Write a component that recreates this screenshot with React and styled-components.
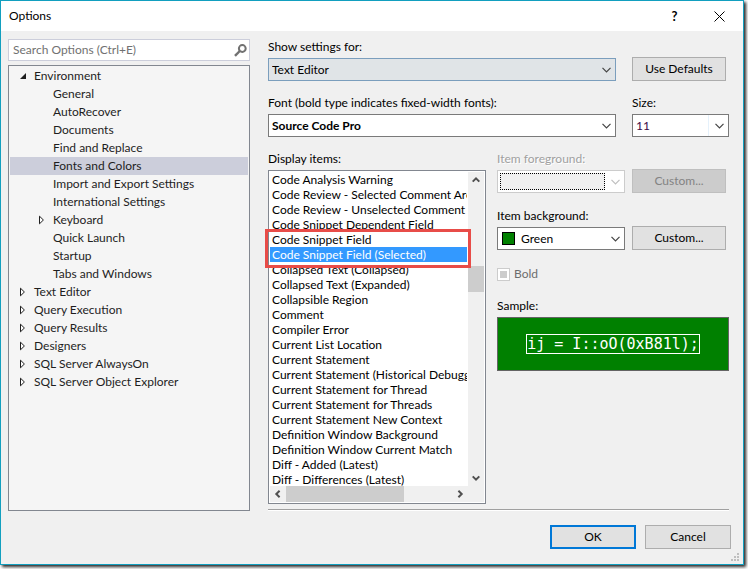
import React from "react";
import styled, { createGlobalStyle, css } from "styled-components";

const GlobalStyle = createGlobalStyle`
  * { box-sizing: border-box; }
  body { margin: 0; background: #fff; overflow: hidden; }
  body, button, input, select {
    font-family: Lato, "Open Sans", sans-serif;
    font-size: 12px;
    line-height: 16px;
    color: #000;
  }
  ul { list-style: none; margin: 0; padding: 0; }
`;

const Dialog = styled.main`
  margin: 0 4px 4px 0;
  border: 1px solid #129fbf;
  background: #f0f0f0;
  box-shadow: 2px 2px 3px rgba(0, 0, 0, 0.85);
`;

const TitleBar = styled.header`
  display: flex;
  align-items: center;
  height: 30px;
  padding: 0 16px 0 8px;
  background: #fff;
`;

const Title = styled.h1`
  flex: 1;
  margin: 0;
  font-size: 12px;
  font-weight: 400;
`;

const TitleButton = styled.button`
  display: grid;
  place-items: center;
  width: 15px;
  height: 24px;
  margin-left: 30px;
  padding: 0;
  border: 0;
  background: transparent;
  font-size: 13px;
  font-weight: 700;
`;

const Body = styled.div`
  display: grid;
  grid-template-columns: 242px minmax(0, 1fr);
  gap: 18px;
  padding: 8px 14px 0 7px;
`;

const Sidebar = styled.nav`
  display: flex;
  flex-direction: column;
  gap: 4px;
`;

const SearchBox = styled.label`
  display: flex;
  align-items: center;
  height: 22px;
  padding: 0 2px 0 4px;
  border: 1px solid #cccedb;
  background: #fff;
`;

const SearchInput = styled.input`
  flex: 1;
  min-width: 0;
  padding: 0;
  border: 0;
  outline: 0;
  background: transparent;
  &::placeholder { color: #717171; opacity: 1; }
`;

const Tree = styled.ul`
  flex: 1;
  && { padding: 1px; }
  border: 1px solid #828790;
  background: #f5f5f5;
`;

const TreeRow = styled.li`
  display: flex;
  align-items: center;
  height: 18px;
  padding-left: ${(p) => (p.$level ? 28 : 9)}px;
  background: ${(p) => (p.$selected ? "#cccedb" : "transparent")};
  color: #1e1e1e;
  white-space: nowrap;
`;

const Arrow = styled.span`
  display: flex;
  width: 15px;
`;

const Settings = styled.section`
  display: flex;
  flex-direction: column;
  gap: 14px;
`;

const FieldRow = styled.div`
  display: grid;
  grid-template-columns: minmax(0, 1fr) 97px;
  column-gap: ${(p) => (p.$tight ? 7 : 16)}px;
  align-items: end;
`;

const Field = styled.div`
  display: flex;
  flex-direction: column;
  gap: 3px;
  min-width: 0;
`;

const Label = styled.label`
  height: 16px;
  white-space: nowrap;
  ${(p) => p.$disabled && css`
    color: #a0a0a0;
    text-shadow: 1px 1px 0 #fff;
  `}
`;

const Combo = styled.div`
  display: flex;
  align-items: center;
  height: 23px;
  padding: 0 4px 0 3px;
  gap: 6px;
  border: 1px solid ${(p) => p.$border || "#7a7a7a"};
  background: ${(p) => p.$fill || "#fff"};
`;

const Select = styled.select`
  flex: 1;
  min-width: 0;
  height: 21px;
  padding: 0;
  border: 0;
  outline: 0;
  appearance: none;
  background: transparent;
  font-weight: ${(p) => (p.$bold ? 700 : 400)};
`;

const EmptySelect = styled(Select)`
  height: 17px;
  margin-left: -1px;
  border: 1px dotted #000;
  background: #f0f0f0;
  opacity: 1;
`;

const SizeInput = styled.input`
  flex: 1;
  min-width: 0;
  height: 21px;
  padding: 0;
  border: 0;
  border-right: 1px solid #e5f1fb;
  outline: 0;
  background: transparent;
  color: #3c0a46;
`;

const ColorChip = styled.span`
  width: 13px;
  height: 13px;
  margin-left: 1px;
  border: 1px solid #000;
  background: #008000;
`;

const PushButton = styled.button`
  width: ${(p) => (p.$wide ? 86 : 94)}px;
  height: 24px;
  padding: 0;
  border: 1px solid #adadad;
  background: #e1e1e1;
  ${(p) => p.$primary && css`border: 2px solid #0078d7;`}
  &:disabled {
    border-color: #bfbfbf;
    background: #ccc;
    color: #838383;
  }
`;

const Details = styled.div`
  display: grid;
  grid-template-columns: minmax(0, 218fr) minmax(0, 232fr);
  gap: 11px;
`;

const ItemSettings = styled.div`
  display: flex;
  flex-direction: column;
  gap: 15px;
`;

const ListFrame = styled.div`
  position: relative;
  display: grid;
  grid-template-columns: minmax(0, 1fr) 16px;
  grid-template-rows: 314px 16px;
  padding: 1px;
  border: 1px solid #828790;
  background: #fff;
`;

const List = styled.ul`
  overflow: hidden;
`;

const ListItem = styled.li`
  height: 15px;
  padding-left: 2px;
  margin-right: 1px;
  line-height: 15px;
  white-space: nowrap;
  overflow: hidden;
  ${(p) => p.$selected && css`
    background: #3399ff;
    color: #fff;
  `}
`;

const ScrollBar = styled.div`
  display: flex;
  flex-direction: ${(p) => (p.$vertical ? "column" : "row")};
  justify-content: space-between;
  background: #f0f0f0;
`;

const ScrollButton = styled.button`
  display: grid;
  place-items: center;
  width: 16px;
  height: 16px;
  padding: 0;
  border: 0;
  background: transparent;
`;

const Track = styled.div`
  flex: 1;
  display: flex;
  flex-direction: ${(p) => (p.$vertical ? "column" : "row")};
`;

const Spacer = styled.div`
  flex: ${(p) => p.$grow};
`;

const Thumb = styled.div`
  flex: ${(p) => p.$grow};
  background: #cdcdcd;
`;

const Corner = styled.div`
  background: #f0f0f0;
`;

const Highlight = styled.div`
  position: absolute;
  left: -4px;
  top: 58px;
  right: 14px;
  height: 39px;
  border: 3px solid #e84c48;
  pointer-events: none;
`;

const CheckLabel = styled.label`
  display: flex;
  align-items: center;
  gap: 4px;
  height: 18px;
  color: #6d6d6d;
`;

const CheckBox = styled.input`
  appearance: none;
  width: 13px;
  height: 13px;
  margin: 0;
  padding: 2px;
  border: 1px solid #ccc;
  background: #ccc content-box;
  box-shadow: inset 0 0 0 2px #fff;
`;

const Sample = styled.div`
  display: grid;
  place-items: center;
  height: 54px;
  border: 1px solid #646464;
  background: #008000;
`;

const SampleText = styled.code`
  border: 1px solid #fff;
  color: #fff;
  font: 15px/18px "DejaVu Sans Mono", monospace;
  white-space: pre;
`;

const Rule = styled.hr`
  width: 100%;
  margin: -9px 0 0;
  border: 0;
  border-top: 1px solid #a0a0a0;
  border-bottom: 1px solid #fff;
`;

const FooterBar = styled.div`
  display: grid;
  grid-template-columns: minmax(0, 1fr) 12px;
  align-items: end;
`;

const Footer = styled.footer`
  display: flex;
  justify-content: flex-end;
  gap: 9px;
  padding: 14px 0 15px;
`;

const Grip = styled.svg`
  display: block;
  margin-bottom: 2px;
`;

const Chevron = ({ color = "#444" }) => (
  <svg width="9" height="6" viewBox="0 0 9 6" aria-hidden="true">
    <path d="M.5 .8 4.5 4.8 8.5 .8" fill="none" stroke={color} strokeWidth="1.2" />
  </svg>
);

const turns = { up: 0, right: 90, down: 180, left: 270 };
const ScrollArrow = ({ to }) => (
  <svg width="8" height="8" viewBox="0 0 8 8" aria-hidden="true">
    <path d="M.7 5.6 4 2.3 7.3 5.6" fill="none" stroke="#505050" strokeWidth="2" transform={`rotate(${turns[to]} 4 4)`} />
  </svg>
);

const tree = [
  ["Environment", 0, "open"],
  ["General", 1],
  ["AutoRecover", 1],
  ["Documents", 1],
  ["Find and Replace", 1],
  ["Fonts and Colors", 1],
  ["Import and Export Settings", 1],
  ["International Settings", 1],
  ["Keyboard", 1, "closed"],
  ["Quick Launch", 1],
  ["Startup", 1],
  ["Tabs and Windows", 1],
  ["Text Editor", 0, "closed"],
  ["Query Execution", 0, "closed"],
  ["Query Results", 0, "closed"],
  ["Designers", 0, "closed"],
  ["SQL Server AlwaysOn", 0, "closed"],
  ["SQL Server Object Explorer", 0, "closed"],
];

const displayItems = [
  "Code Analysis Warning",
  "Code Review - Selected Comment Area",
  "Code Review - Unselected Comment",
  "Code Snippet Dependent Field",
  "Code Snippet Field",
  "Code Snippet Field (Selected)",
  "Collapsed Text (Collapsed)",
  "Collapsed Text (Expanded)",
  "Collapsible Region",
  "Comment",
  "Compiler Error",
  "Current List Location",
  "Current Statement",
  "Current Statement (Historical Debugger)",
  "Current Statement for Thread",
  "Current Statement for Threads",
  "Current Statement New Context",
  "Definition Window Background",
  "Definition Window Current Match",
  "Diff - Added (Latest)",
  "Diff - Differences (Latest)",
];

const TreeArrow = ({ state }) => (
  <Arrow>
    {state === "open" && (
      <svg width="8" height="8" viewBox="0 0 8 8" aria-hidden="true">
        <path d="M7 1v6H1z" fill="#1e1e1e" />
      </svg>
    )}
    {state === "closed" && (
      <svg width="8" height="10" viewBox="0 0 8 10" aria-hidden="true">
        <path d="M1.5 1.2v7.6L5.4 5z" fill="#fff" stroke="#1e1e1e" />
      </svg>
    )}
  </Arrow>
);

export default function App() {
  return (
    <>
      <GlobalStyle />
      <Dialog role="dialog" aria-labelledby="title">
        <TitleBar>
          <Title id="title">Options</Title>
          <TitleButton aria-label="Help">?</TitleButton>
          <TitleButton aria-label="Close">
            <svg width="11" height="11" viewBox="0 0 11 11">
              <path d="M.5.5l10 10M10.5.5l-10 10" stroke="#000" />
            </svg>
          </TitleButton>
        </TitleBar>
        <Body>
          <Sidebar>
            <SearchBox>
              <SearchInput type="text" aria-label="Search Options" placeholder="Search Options (Ctrl+E)" />
              <svg width="13" height="13" viewBox="0 0 13 13" aria-hidden="true">
                <circle cx="8.3" cy="4.5" r="3.4" fill="none" stroke="#717171" strokeWidth="2" />
                <path d="M5.8 7 1 11.8" stroke="#717171" strokeWidth="2.4" />
              </svg>
            </SearchBox>
            <Tree role="tree" aria-label="Option pages">
              {tree.map(([name, level, state]) => (
                <TreeRow key={name} role="treeitem" $level={level} $selected={name === "Fonts and Colors"} aria-selected={name === "Fonts and Colors"}>
                  <TreeArrow state={state} />
                  {name}
                </TreeRow>
              ))}
            </Tree>
          </Sidebar>
          <Settings>
            <FieldRow>
              <Field>
                <Label htmlFor="scope">Show settings for:</Label>
                <Combo $border="#7b9ebd" $fill="#e0e4e7">
                  <Select id="scope"><option>Text Editor</option></Select>
                  <Chevron />
                </Combo>
              </Field>
              <PushButton>Use Defaults</PushButton>
            </FieldRow>
            <FieldRow>
              <Field>
                <Label htmlFor="font">Font (bold type indicates fixed-width fonts):</Label>
                <Combo>
                  <Select id="font" $bold><option>Source Code Pro</option></Select>
                  <Chevron />
                </Combo>
              </Field>
              <Field>
                <Label htmlFor="size">Size:</Label>
                <Combo>
                  <SizeInput id="size" type="text" defaultValue="11" />
                  <Chevron />
                </Combo>
              </Field>
            </FieldRow>
            <Details>
              <Field>
                <Label id="items-label" as="span">Display items:</Label>
                <ListFrame>
                  <List role="listbox" aria-labelledby="items-label">
                    {displayItems.map((name) => (
                      <ListItem key={name} role="option" $selected={name === "Code Snippet Field (Selected)"} aria-selected={name === "Code Snippet Field (Selected)"}>
                        {name}
                      </ListItem>
                    ))}
                  </List>
                  <ScrollBar $vertical>
                    <ScrollButton aria-label="Scroll up"><ScrollArrow to="up" /></ScrollButton>
                    <Track $vertical>
                      <Spacer $grow={78} />
                      <Thumb $grow={26} />
                      <Spacer $grow={178} />
                    </Track>
                    <ScrollButton aria-label="Scroll down"><ScrollArrow to="down" /></ScrollButton>
                  </ScrollBar>
                  <ScrollBar>
                    <ScrollButton aria-label="Scroll left"><ScrollArrow to="left" /></ScrollButton>
                    <Track>
                      <Thumb $grow={118} />
                      <Spacer $grow={48} />
                    </Track>
                    <ScrollButton aria-label="Scroll right"><ScrollArrow to="right" /></ScrollButton>
                  </ScrollBar>
                  <Corner />
                  <Highlight />
                </ListFrame>
              </Field>
              <ItemSettings>
                <FieldRow $tight>
                  <Field>
                    <Label htmlFor="foreground" $disabled>Item foreground:</Label>
                    <Combo $border="#ccc">
                      <EmptySelect id="foreground" disabled />
                      <Chevron color="#bfbfbf" />
                    </Combo>
                  </Field>
                  <PushButton disabled>Custom...</PushButton>
                </FieldRow>
                <FieldRow $tight>
                  <Field>
                    <Label htmlFor="background">Item background:</Label>
                    <Combo>
                      <ColorChip />
                      <Select id="background"><option>Green</option></Select>
                      <Chevron />
                    </Combo>
                  </Field>
                  <PushButton>Custom...</PushButton>
                </FieldRow>
                <CheckLabel>
                  <CheckBox type="checkbox" disabled />
                  Bold
                </CheckLabel>
                <Field>
                  <Label as="span">Sample:</Label>
                  <Sample><SampleText>ij = I::oO(0xB81l);</SampleText></Sample>
                </Field>
              </ItemSettings>
            </Details>
            <Rule />
          </Settings>
        </Body>
        <FooterBar>
          <Footer>
            <PushButton $wide $primary>OK</PushButton>
            <PushButton $wide>Cancel</PushButton>
          </Footer>
          <Grip width="9" height="9" viewBox="0 0 9 9" aria-hidden="true">
            <path d="M6 0h2v2H6zM3 3h2v2H3zM6 3h2v2H6zM0 6h2v2H0zM3 6h2v2H3zM6 6h2v2H6z" fill="#bfbfbf" />
          </Grip>
        </FooterBar>
      </Dialog>
    </>
  );
}
